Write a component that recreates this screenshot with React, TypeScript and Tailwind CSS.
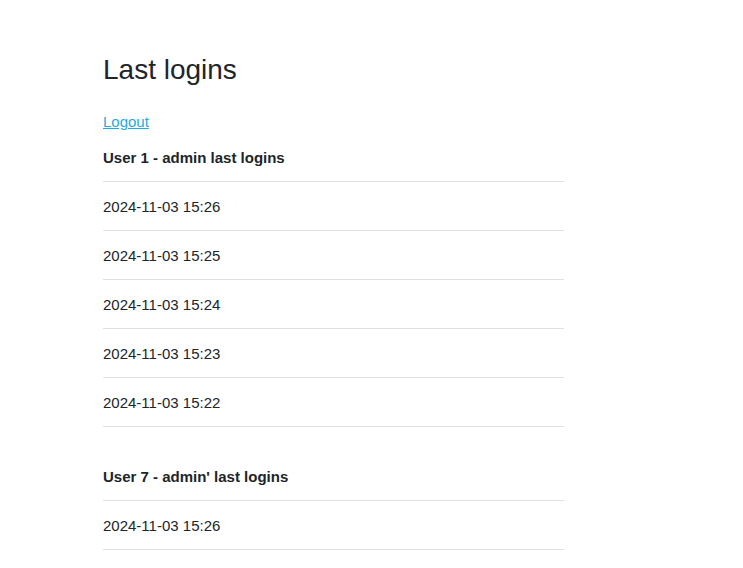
const logins = [
  {
    title: 'User 1 - admin last logins',
    dates: ['2024-11-03 15:26', '2024-11-03 15:25', '2024-11-03 15:24', '2024-11-03 15:23', '2024-11-03 15:22'],
  },
  {
    title: "User 7 - admin' last logins",
    dates: ['2024-11-03 15:26', '2024-11-03 15:25', '2024-11-03 15:24', '2024-11-03 15:23', '2024-11-03 15:22'],
  },
];

function LoginTable({ title, dates }: { title: string; dates: string[] }) {
  return (
    <table className="w-full border-collapse text-left">
      <thead>
        <tr className="border-b border-[#dee2e6]">
          <th className="pt-[13px] pb-[11px] text-[15px] leading-6 font-bold">{title}</th>
        </tr>
      </thead>
      <tbody>
        {dates.map((date, i) => (
          <tr key={i} className="border-b border-[#dee2e6]">
            <td className="pt-[13px] pb-[11px] text-[15px] leading-6">{date}</td>
          </tr>
        ))}
      </tbody>
    </table>
  );
}

export default function App() {
  return (
    <div className="min-h-screen bg-white font-['Liberation_Sans',Arial,sans-serif] text-[#212529]">
      <div className="ml-[103px] w-[461px] pt-[53px]">
        <h2 className="text-[28px] leading-[34px] font-normal">Last logins</h2>
        <a href="#" className="mt-[24px] block w-fit text-[15px] leading-[22px] text-[#26a9e0] underline">
          Logout
        </a>
        <div className="flex flex-col gap-[25px]">
          {logins.map(item => (
            <LoginTable key={item.title} title={item.title} dates={item.dates} />
          ))}
        </div>
      </div>
    </div>
  );
}
